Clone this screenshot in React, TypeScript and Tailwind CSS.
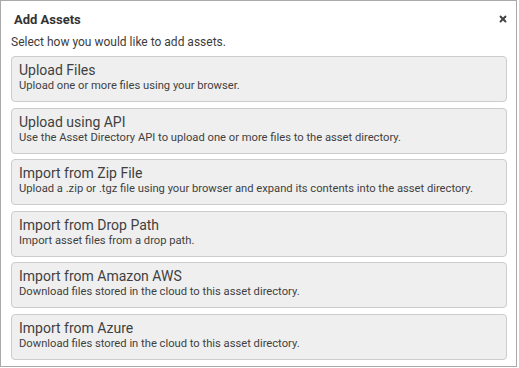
import { X } from "lucide-react";

const options = [
  { title: "Upload Files", desc: "Upload one or more files using your browser." },
  { title: "Upload using API", desc: "Use the Asset Directory API to upload one or more files to the asset directory." },
  { title: "Import from Zip File", desc: "Upload a .zip or .tgz file using your browser and expand its contents into the asset directory." },
  { title: "Import from Drop Path", desc: "Import asset files from a drop path." },
  { title: "Import from Amazon AWS", desc: "Download files stored in the cloud to this asset directory." },
  { title: "Import from Azure", desc: "Download files stored in the cloud to this asset directory." },
];

export default function App() {
  return (
    <div className="w-[519px] h-[368px] bg-white font-['Roboto',sans-serif] text-[#3c3c3c]">
      <div className="w-[517px] h-[367px] border border-[#a9a9a9] flex flex-col">
        <div className="flex items-center justify-between pl-[13px] pr-[8px] pt-[7px] h-[31px]">
          <h2 className="text-[13px] font-bold leading-[16px] text-[#333]">Add Assets</h2>
          <X size={10} strokeWidth={4.5} className="text-[#444] mt-[-2px]" />
        </div>
        <p className="px-[10px] text-[12px] leading-[16px] mt-[2px]">Select how you would like to add assets.</p>
        <div className="flex flex-col gap-[5.6px] pl-[10px] pr-[9px] mt-[6px]">
          {options.map((o) => (
            <button
              key={o.title}
              className="h-[46px] text-left bg-[#efefef] border border-[#cccccc] rounded-[4px] pl-[7px] pt-[5px] flex flex-col justify-start"
            >
              <div className="text-[14px] leading-[17px] text-[#3f3f3f]">{o.title}</div>
              <div className="text-[11.2px] leading-[14px] text-[#3f3f3f]">{o.desc}</div>
            </button>
          ))}
        </div>
      </div>
    </div>
  );
}
